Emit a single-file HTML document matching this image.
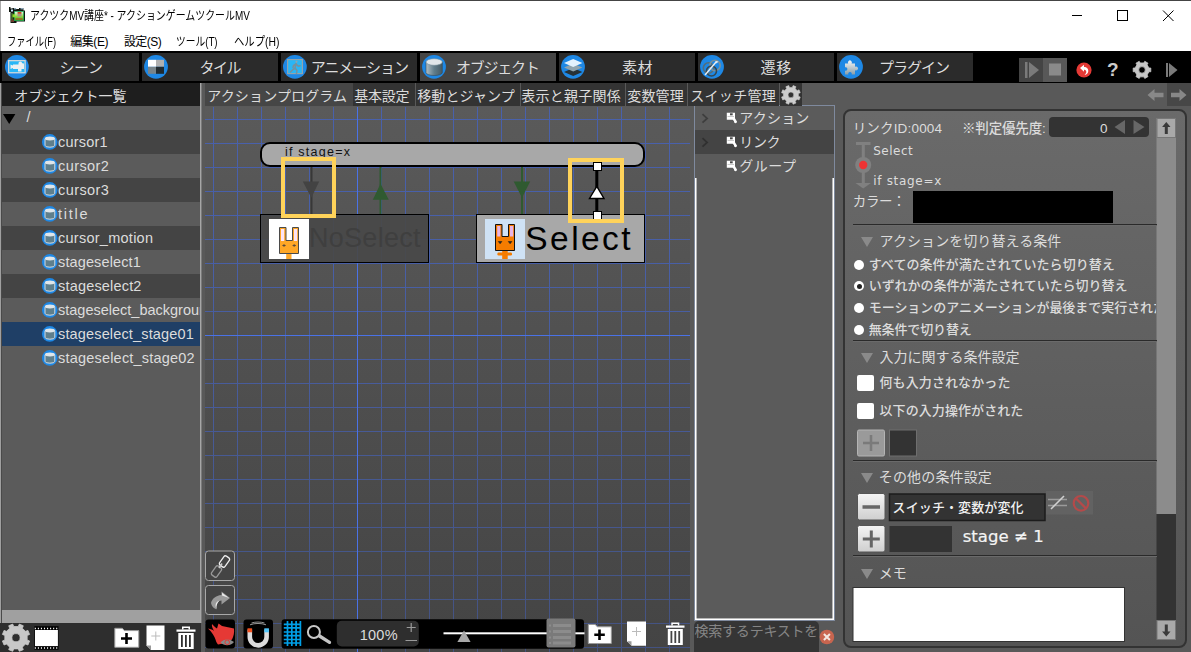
<!DOCTYPE html>
<html lang="ja"><head><meta charset="utf-8"><title>アクツクMV講座* - アクションゲームツクールMV</title>
<style>
*{box-sizing:border-box;margin:0;padding:0}
html,body{width:1191px;height:652px;overflow:hidden;background:#595959}
body{position:relative;font-family:"Liberation Sans","Noto Sans CJK JP",sans-serif;color:#dcdcdc;font-size:14px}
.a{position:absolute}
.t{position:absolute;white-space:nowrap;transform-origin:0 50%}
svg{position:absolute;overflow:visible}
.tb{position:absolute;top:53px;height:28px;width:137px;background:#2b2b2b}
.circ{position:absolute;width:23px;height:23px;border-radius:50%;background:#1e88e5;top:55px;overflow:hidden}
.row{position:absolute;left:2px;width:198px;height:24px}
.ob{position:absolute;left:42px;width:15px;height:15px;border-radius:50%;background:#1e88e5}
.ob i{position:absolute;left:4px;top:3px;width:7px;height:9px;background:#90a4ae;border-radius:3px/1.5px;border:1px solid #2a3a44}
.tab{position:absolute;top:83px;height:23px;background:#333}
.sec{position:absolute;width:0;height:0;border-left:6px solid transparent;border-right:6px solid transparent;border-top:10px solid #8a8a8a}
.hr{position:absolute;left:853px;width:304px;height:2px;background:#2a2a2a;border-bottom:1px solid #6a6a6a}
.radio{position:absolute;width:10px;height:10px;border-radius:50%;background:#fff;left:854px}
.chk{position:absolute;left:857px;width:17px;height:16px;background:#fff;border-radius:2px}
</style></head><body>
<!-- TITLE/MENU -->
<div class="a" style="left:0;top:0;width:1191px;height:51px;background:#fff"></div>
<div class="a" style="left:0;top:0;width:1191px;height:1px;background:#444"></div>
<div class="a" style="left:0;top:1px;width:1px;height:50px;background:#aaa"></div>
<svg style="left:9px;top:7px" width="16" height="16" viewBox="0 0 16 16">
<path d="M0 0h1.500v1.500h2V1h3.500v1h3V1h4.500v2.500H16v11h-8.500v1.500H1.500V5H0z" fill="#101810"/>
<rect x="2" y="2.500" width="2" height="2" fill="#cfe8ff"/><rect x="5" y="1.300" width="2.500" height="1" fill="#bfe0ff"/><rect x="11.500" y="1.300" width="3" height="1" fill="#bfe0ff"/>
<rect x="1.800" y="6" width="2.500" height="8.500" fill="#3a5a2a"/><rect x="2" y="12.500" width="3" height="2.500" fill="#6a3a2a"/>
<rect x="5" y="4" width="10" height="10" fill="#1f9a4a"/><rect x="3.500" y="7.300" width="2.500" height="3" fill="#8fe020"/>
<linearGradient id="icg" x1="0" y1="0" x2="0" y2="1"><stop offset="0" stop-color="#e8f6f0"/><stop offset=".55" stop-color="#8fd840"/><stop offset="1" stop-color="#4aa828"/></linearGradient>
<rect x="5.800" y="4.800" width="8.400" height="8.400" fill="url(#icg)"/>
<rect x="8.500" y="5" width="4" height="4.500" fill="#b09088"/><rect x="8.800" y="5" width="3.400" height="1.600" fill="#d04818"/>
<rect x="6.500" y="11.500" width="7" height="1" fill="#c03818"/>
</svg>
<span class="t" id="ttl" style="left:30.28px;top:7.3px;font-size:12px;line-height:18px;transform:scaleX(0.827);color:#000">アクツクMV講座* - アクションゲームツクールMV</span><span class="t" id="m1" style="left:6.88px;top:33px;font-size:12px;line-height:18px;transform:scaleX(0.774);color:#000">ファイル(F)</span><span class="t" id="m2" style="left:70.18px;top:33px;font-size:12px;line-height:18px;letter-spacing:-0.43px;color:#000">編集(E)</span><span class="t" id="m3" style="left:123.88px;top:33px;font-size:12px;line-height:18px;letter-spacing:-0.55px;color:#000">設定(S)</span><span class="t" id="m4" style="left:176.48px;top:33px;font-size:12px;line-height:18px;transform:scaleX(0.810);color:#000">ツール(T)</span><span class="t" id="m5" style="left:233.58px;top:33px;font-size:12px;line-height:18px;transform:scaleX(0.864);color:#000">ヘルプ(H)</span>
<svg style="left:1071px;top:9px" width="110" height="14" viewBox="0 0 110 14" fill="none" stroke="#000" stroke-width="1"><path d="M1 6.500H11"/><rect x="46.500" y="1.500" width="10" height="10"/><path d="M92 1.500L102.500 12M102.500 1.500L92 12"/></svg>

<!-- TOOLBAR -->
<div class="a" style="left:0;top:51px;width:1191px;height:32px;background:#000"></div>
<div class="tb" style="left:2px"></div><div class="tb" style="left:142px;width:136px"></div><div class="tb" style="left:281px;width:136px"></div>
<div class="tb" style="left:420px;width:136px;background:#454545"></div><div class="tb" style="left:559px;width:136px"></div><div class="tb" style="left:698px;width:136px"></div><div class="tb" style="left:837px;width:136px"></div>


<svg style="left:0;top:0" width="1191" height="652" viewBox="0 0 1191 652">
<defs><linearGradient id="cyl" x1="0" y1="0" x2="1" y2="0"><stop offset="0" stop-color="#b0bec5"/><stop offset=".5" stop-color="#607d8b"/><stop offset="1" stop-color="#455a64"/></linearGradient>
<linearGradient id="pz" x1="0" y1="0" x2="0" y2="1"><stop offset="0" stop-color="#f4f7f8"/><stop offset="1" stop-color="#8a9ea8"/></linearGradient></defs>
<g fill="#1e88e5"><circle cx="16.900" cy="66.800" r="11.900"/><circle cx="156" cy="66.800" r="11.900"/><circle cx="294.900" cy="66.800" r="11.900"/><circle cx="434" cy="66.800" r="11.900"/><circle cx="573" cy="66.800" r="11.900"/><circle cx="712" cy="66.800" r="11.900"/><circle cx="851" cy="66.800" r="11.900"/></g>
<!-- scene -->
<rect x="8" y="60" width="17.800" height="13.400" fill="#cfd8dc"/><rect x="9.300" y="61.300" width="15.200" height="10.800" fill="#29b6f6"/>
<path d="M10.500 64.500l2.500 1v-1h5.500v-1.200a1.800 1.800 0 0 1 3.600 0a1.300 1.300 0 0 1 1.900 1.200v4.500h-2.500v2.500h-3.500v-2.500h-5v-1l-2.500 1z" fill="#eceff1"/>
<!-- tile -->
<rect x="148" y="59.800" width="8" height="7" fill="#fff"/><rect x="156" y="59.800" width="8" height="7" fill="#b0b0b0"/><rect x="148" y="66.800" width="8" height="7" fill="#78848a"/><rect x="156" y="66.800" width="8" height="7" fill="#212b30"/>
<!-- animation -->
<rect x="287" y="59" width="16" height="15.200" fill="#90a4ae"/><rect x="288.200" y="60.200" width="13.600" height="12.800" fill="#29b6f6"/>
<g stroke="#78909c" stroke-width="1.500" fill="none" stroke-linecap="round"><circle cx="296.500" cy="61.800" r="1.100" fill="#90a4ae" stroke="none"/><path d="M296 63.500l-1 4.500 2 2.500-.5 3M295 68l-2.500 2-2 2M296 64l-2.500 1.500-.5 2M296.300 64.200l2 2 1.800-.5"/></g>
<!-- object -->
<path d="M426 62v10.500a8.150 3 0 0 0 16.300 0V62z" fill="url(#cyl)" stroke="#37474f" stroke-width=".6"/><ellipse cx="434.150" cy="62" rx="8.150" ry="3.300" fill="#dfe6ea" stroke="#78909c" stroke-width=".6"/>
<!-- material -->
<path d="M564 72l9.200-4 9.200 4-9.200 4z" fill="#263238"/><path d="M564 67.500l9.200-4 9.200 4-9.200 4z" fill="#90a4ae"/><path d="M564 63l9.200-4 9.200 4-9.200 4z" fill="#e3f2fd"/>
<!-- transition -->
<g fill="none" stroke-width="1.600"><circle cx="708.500" cy="68" r="5.200" stroke="#546e7a"/><circle cx="715" cy="65.500" r="5.200" stroke="#78909c"/><circle cx="711.500" cy="71" r="5" stroke="#37474f"/><path d="M705 75l11.500-13.500" stroke="#eceff1" stroke-width="1.400"/><path d="M715.500 61l3 .5-2 2z" fill="#eceff1" stroke="none"/></g>
<!-- plugin -->
<path d="M845 63.500h3.200a2 2 0 1 1 3.400 0h3.400v3.300a2 2 0 1 1 0 3.400v4.300h-3.300a1.800 1.800 0 1 0-3.400 0H845v-3.800a1.800 1.800 0 1 0 0-3.400z" fill="url(#pz)"/>
<!-- right toolbar -->
<rect x="1019" y="58" width="24" height="24" fill="#444"/><rect x="1043" y="58" width="24" height="24" fill="#585858"/>
<rect x="1025" y="62" width="2.500" height="16" fill="#7a7a7a"/><path d="M1029 62v16l10-8z" fill="#7a7a7a"/><rect x="1049" y="63.500" width="12" height="12" fill="#8a8a8a"/>
<circle cx="1084" cy="70" r="7.600" fill="#e53935"/><path d="M1080 68l4-3.200v2.200c3.500 0 5 2.500 4 5.500-.8 1.800-2 2.300-3.500 2.300 1.800-1 2.200-2.800 1.500-4-.5-.8-1.200-1-2-1v2z" fill="#fff"/>
<rect x="1166" y="63" width="2" height="14" fill="#7a7a7a"/><path d="M1169 63v14l8.500-7z" fill="#7a7a7a"/>
<!-- gears -->
<path d="M1148.95 68.04L1150.80 68.03L1150.80 71.77L1148.95 71.76L1147.09 74.99L1148.02 76.59L1144.78 78.46L1143.86 76.85L1140.14 76.85L1139.22 78.46L1135.98 76.59L1136.91 74.99L1135.05 71.76L1133.20 71.77L1133.20 68.03L1135.05 68.04L1136.91 64.81L1135.98 63.21L1139.22 61.34L1140.14 62.95L1143.86 62.95L1144.78 61.34L1148.02 63.21L1147.09 64.81ZM1145.30 69.90A3.3 3.3 0 1 0 1138.70 69.90A3.3 3.3 0 1 0 1145.30 69.90Z" fill="#c6c6c6" fill-rule="evenodd" stroke="#c6c6c6" stroke-width=".8" stroke-linejoin="round"/>
<!-- header arrows -->
<rect x="1167" y="83" width="24" height="23" fill="#474747"/>
<path d="M1147.500 95l7-6v3.800h9v4.400h-9v3.800z" fill="#888"/><path d="M1186.500 95l-7-6v3.800h-8.500v4.400h8.500v3.800z" fill="#888"/>
</svg>
<span class="t" style="left:1107px;top:58px;font-size:19px;line-height:24px;font-weight:bold;color:#ccc">?</span>
<span class="t" id="tb1" style="left:59.6px;top:56.55px;font-size:15px;line-height:22.5px;letter-spacing:-0.48px;">シーン</span><span class="t" id="tb2" style="left:199.4px;top:56.55px;font-size:15px;line-height:22.5px;letter-spacing:-1.46px;">タイル</span><span class="t" id="tb3" style="left:310.7px;top:56.55px;font-size:15px;line-height:22.5px;letter-spacing:-1.03px;">アニメーション</span><span class="t" id="tb4" style="left:456px;top:56.55px;font-size:15px;line-height:22.5px;letter-spacing:-1.22px;">オブジェクト</span><span class="t" id="tb5" style="left:621.9px;top:56.55px;font-size:15px;line-height:22.5px;letter-spacing:0.58px;">素材</span><span class="t" id="tb6" style="left:760.6px;top:56.55px;font-size:15px;line-height:22.5px;letter-spacing:0.58px;">遷移</span><span class="t" id="tb7" style="left:879.1px;top:56.55px;font-size:15px;line-height:22.5px;letter-spacing:-1.05px;">プラグイン</span>

<!-- LEFT PANEL -->
<div class="a" style="left:0;top:83px;width:1px;height:569px;background:#a0a0a0"></div><div class="a" style="left:1px;top:83px;width:1px;height:569px;background:#4a4a4a"></div>
<div class="a" style="left:2px;top:83px;width:198px;height:23px;background:#1e1e1e"></div>
<span class="t" id="lh" style="left:14.36px;top:85.5px;font-size:14px;line-height:21px;letter-spacing:0.03px;">オブジェクト一覧</span>
<div class="a" style="left:2px;top:106px;width:198px;height:505px;background:#5b5b5b"></div>
<div class="row" style="top:130px;background:#444"></div>
<div class="row" style="top:178px;background:#444"></div>
<div class="row" style="top:226px;background:#444"></div>
<div class="row" style="top:274px;background:#444"></div>
<div class="row" style="top:322px;background:#1f3f66"></div>
<div class="a" style="left:2px;top:610px;width:198px;height:13px;background:#a0a0a0"></div>
<div class="a" style="left:0px;top:623px;width:201px;height:29px;background:#2e2e2e"></div>
<div class="a" style="left:200px;top:83px;width:1px;height:540px;background:#a6a6a6"></div><div class="a" style="left:201px;top:83px;width:1px;height:540px;background:#7a7a7a"></div>
<svg style="left:0;top:0" width="1191" height="652" viewBox="0 0 1191 652">
<path d="M3 114h12.400l-6.200 10z" fill="#000"/>
<circle cx="49.750" cy="141.9" r="7.800" fill="#1e88e5"/><path d="M45 138.7v6.600a4.900 1.900 0 0 0 9.800 0v-6.600z" fill="#5f7f8c" stroke="#e4e8ea" stroke-width=".9"/><ellipse cx="49.900" cy="138.5" rx="4.900" ry="1.900" fill="#dfe6ea"/>
<circle cx="49.750" cy="165.9" r="7.800" fill="#1e88e5"/><path d="M45 162.7v6.600a4.900 1.900 0 0 0 9.800 0v-6.600z" fill="#5f7f8c" stroke="#e4e8ea" stroke-width=".9"/><ellipse cx="49.900" cy="162.5" rx="4.900" ry="1.900" fill="#dfe6ea"/>
<circle cx="49.750" cy="189.9" r="7.800" fill="#1e88e5"/><path d="M45 186.7v6.600a4.900 1.900 0 0 0 9.800 0v-6.600z" fill="#5f7f8c" stroke="#e4e8ea" stroke-width=".9"/><ellipse cx="49.900" cy="186.5" rx="4.900" ry="1.900" fill="#dfe6ea"/>
<circle cx="49.750" cy="213.9" r="7.800" fill="#1e88e5"/><path d="M45 210.7v6.600a4.900 1.900 0 0 0 9.800 0v-6.600z" fill="#5f7f8c" stroke="#e4e8ea" stroke-width=".9"/><ellipse cx="49.900" cy="210.5" rx="4.900" ry="1.900" fill="#dfe6ea"/>
<circle cx="49.750" cy="237.9" r="7.800" fill="#1e88e5"/><path d="M45 234.7v6.600a4.900 1.900 0 0 0 9.800 0v-6.600z" fill="#5f7f8c" stroke="#e4e8ea" stroke-width=".9"/><ellipse cx="49.900" cy="234.5" rx="4.900" ry="1.900" fill="#dfe6ea"/>
<circle cx="49.750" cy="261.9" r="7.800" fill="#1e88e5"/><path d="M45 258.7v6.600a4.900 1.900 0 0 0 9.800 0v-6.600z" fill="#5f7f8c" stroke="#e4e8ea" stroke-width=".9"/><ellipse cx="49.900" cy="258.5" rx="4.900" ry="1.900" fill="#dfe6ea"/>
<circle cx="49.750" cy="285.9" r="7.800" fill="#1e88e5"/><path d="M45 282.7v6.600a4.900 1.900 0 0 0 9.800 0v-6.600z" fill="#5f7f8c" stroke="#e4e8ea" stroke-width=".9"/><ellipse cx="49.900" cy="282.5" rx="4.900" ry="1.900" fill="#dfe6ea"/>
<circle cx="49.750" cy="309.9" r="7.800" fill="#1e88e5"/><path d="M45 306.7v6.600a4.900 1.900 0 0 0 9.800 0v-6.600z" fill="#5f7f8c" stroke="#e4e8ea" stroke-width=".9"/><ellipse cx="49.900" cy="306.5" rx="4.900" ry="1.900" fill="#dfe6ea"/>
<circle cx="49.750" cy="333.9" r="7.800" fill="#1e88e5"/><path d="M45 330.7v6.600a4.900 1.900 0 0 0 9.800 0v-6.600z" fill="#5f7f8c" stroke="#e4e8ea" stroke-width=".9"/><ellipse cx="49.900" cy="330.5" rx="4.900" ry="1.900" fill="#dfe6ea"/>
<circle cx="49.750" cy="357.9" r="7.800" fill="#1e88e5"/><path d="M45 354.7v6.600a4.900 1.900 0 0 0 9.800 0v-6.600z" fill="#5f7f8c" stroke="#e4e8ea" stroke-width=".9"/><ellipse cx="49.900" cy="354.5" rx="4.900" ry="1.900" fill="#dfe6ea"/>

<!-- bottom-left icons -->
<path d="M18.22 626.52L19.27 624.09L23.31 625.76L22.33 628.22L25.48 631.37L27.94 630.39L29.61 634.43L27.18 635.48L27.18 639.92L29.61 640.97L27.94 645.01L25.48 644.03L22.33 647.18L23.31 649.64L19.27 651.31L18.22 648.88L13.78 648.88L12.73 651.31L8.69 649.64L9.67 647.18L6.52 644.03L4.06 645.01L2.39 640.97L4.82 639.92L4.82 635.48L2.39 634.43L4.06 630.39L6.52 631.37L9.67 628.22L8.69 625.76L12.73 624.09L13.78 626.52ZM20.10 637.70A4.1 4.1 0 1 0 11.90 637.70A4.1 4.1 0 1 0 20.10 637.70Z" fill="#c8c8c8" fill-rule="evenodd" stroke="#c8c8c8" stroke-width=".8" stroke-linejoin="round"/>
<rect x="34.400" y="626.200" width="24.100" height="23.500" fill="#000"/><rect x="35" y="630" width="22.900" height="16.100" fill="#fff"/>
<path d="M34.800 628.500h23M34.800 648h23" stroke="#fff" stroke-width="1.700" stroke-dasharray="1.100 1.950" fill="none"/>
<path d="M114.800 628.300h7.500l2 2.300h14.500v16.700h-24z" fill="#fff" stroke="#9a9a9a" stroke-width="1"/><path d="M126.500 633v11M121 638.500h11" stroke="#000" stroke-width="2.600" fill="none"/>
<path d="M146.500 625.500h18v24.500h-13.500l-4.500-4.500z" fill="#fff"/><path d="M146.500 645.500h4.500v4.500z" fill="#999"/><path d="M155.800 631.500v9M151.300 636h9" stroke="#bbb" stroke-width="1" fill="none"/>
<g fill="#fff"><rect x="176.500" y="629.500" width="19" height="2.200"/><path d="M182 629.500v-3h8v3h-1.500v-1.600h-5v1.600z"/><path d="M178.300 633h15.400v16h-15.400zM181 635v12h1.800v-12zM185 635v12h1.800v-12zM189 635v12h1.800v-12z" fill-rule="evenodd"/></g>
</svg>
<span class="t" id="l0" style="left:26.42px;top:107.125px;font-size:14.5px;line-height:21.75px;letter-spacing:2.13px;">/</span><span class="t" id="l1" style="left:58.02px;top:131.925px;font-size:14.5px;line-height:21.75px;letter-spacing:0.20px;">cursor1</span><span class="t" id="l2" style="left:58.02px;top:155.925px;font-size:14.5px;line-height:21.75px;letter-spacing:0.42px;">cursor2</span><span class="t" id="l3" style="left:58.02px;top:179.925px;font-size:14.5px;line-height:21.75px;letter-spacing:0.42px;">cursor3</span><span class="t" id="l4" style="left:58.02px;top:203.925px;font-size:14.5px;line-height:21.75px;letter-spacing:1.75px;">title</span><span class="t" id="l5" style="left:58.02px;top:227.925px;font-size:14.5px;line-height:21.75px;letter-spacing:0.26px;">cursor_motion</span><span class="t" id="l6" style="left:58.02px;top:251.925px;font-size:14.5px;line-height:21.75px;letter-spacing:0.12px;">stageselect1</span><span class="t" id="l7" style="left:58.02px;top:275.925px;font-size:14.5px;line-height:21.75px;letter-spacing:0.18px;">stageselect2</span><div class="a" style="left:2px;top:298px;width:198px;height:24px;overflow:hidden"><div class="a" style="left:-2px;top:-298px"><span class="t" id="l8" style="left:58.02px;top:299.925px;font-size:14.5px;line-height:21.75px;">stageselect_background</span></div></div><span class="t" id="l9" style="left:58.02px;top:323.925px;font-size:14.5px;line-height:21.75px;letter-spacing:0.15px;">stageselect_stage01</span><span class="t" id="l10" style="left:58.02px;top:347.925px;font-size:14.5px;line-height:21.75px;letter-spacing:0.20px;">stageselect_stage02</span>

<!-- TREE PANEL -->
<div class="a" style="left:694px;top:105px;width:141px;height:516px;background:#5b5b5b;border:1px solid #7f8a9e"></div>
<div class="a" style="left:695px;top:130px;width:139px;height:24px;background:#444"></div>
<div class="a" style="left:695px;top:178px;width:139px;height:442px;border:1px solid #fff;border-top:none;box-shadow:inset 1px 0 0 rgba(255,255,255,.55),inset -1px 0 0 rgba(255,255,255,.55),inset 0 -1px 0 rgba(255,255,255,.55)"></div>
<!-- TABS -->
<div class="tab" style="left:205px;width:148px;background:#464646"></div>
<div class="tab" style="left:353px;width:62px"></div>
<div class="tab" style="left:416px;width:104px"></div>
<div class="tab" style="left:521px;width:104px"></div>
<div class="tab" style="left:626px;width:61px"></div>
<div class="tab" style="left:688px;width:91px"></div>
<div class="tab" style="left:780px;width:22px"></div>
<span class="t" id="tab1" style="left:207.26px;top:85.7px;font-size:14px;line-height:21px;letter-spacing:0.15px;">アクションプログラム</span><span class="t" id="tab2" style="left:354.36px;top:85.7px;font-size:14px;line-height:21px;letter-spacing:-0.31px;">基本設定</span><span class="t" id="tab3" style="left:417.16px;top:85.7px;font-size:14px;line-height:21px;letter-spacing:0.13px;">移動とジャンプ</span><span class="t" id="tab4" style="left:521.16px;top:85.7px;font-size:14px;line-height:21px;letter-spacing:0.28px;">表示と親子関係</span><span class="t" id="tab5" style="left:627.16px;top:85.7px;font-size:14px;line-height:21px;letter-spacing:0.23px;">変数管理</span><span class="t" id="tab6" style="left:690.16px;top:85.7px;font-size:14px;line-height:21px;letter-spacing:0.34px;">スイッチ管理</span>

<!-- CANVAS -->
<div id="canvas" class="a" style="left:205px;top:107px;width:485px;height:545px;overflow:hidden;background:linear-gradient(#5a5a5a,#444)">
<div class="a" style="left:0;top:0;width:485px;height:545px;background-image:linear-gradient(to right,#4464c8 1px,transparent 1px),linear-gradient(to bottom,#4464c8 1px,transparent 1px);background-size:24px 24px;background-position:8px 12px;opacity:.74;-webkit-mask-image:linear-gradient(#000 20%,rgba(0,0,0,.62));mask-image:linear-gradient(#000 20%,rgba(0,0,0,.62))"></div>
<div class="a" style="left:152px;top:0;width:1px;height:545px;background:#4a72e6"></div>
<div class="a" style="left:0;top:228px;width:485px;height:1px;background:#4a72e6"></div>
</div>
<svg style="left:0;top:0" width="1191" height="652" viewBox="0 0 1191 652">
<!-- pill -->
<rect x="261" y="143" width="383" height="23" rx="9" fill="#a8a8a8" stroke="#000" stroke-width="2"/>
<!-- arrows -->
<rect x="310.500" y="167" width="2" height="47" fill="#383838"/><path d="M302.800 181.500H319.200L311.300 197.700Z" fill="#434343"/>
<rect x="379.500" y="167" width="2" height="47" fill="#2f5a30"/><path d="M372.800 199.800H388.800L380.500 183.700Z" fill="#2f5a30"/>
<rect x="521" y="167" width="2" height="47" fill="#2f5a30"/><path d="M513.700 181.500H530.100L522 197.700Z" fill="#2f5a30"/>
<!-- NoSelect node -->
<rect x="260.500" y="214.500" width="168" height="48" fill="#484848" fill-opacity=".93" stroke="#000" stroke-width="1"/>
<rect x="269" y="219" width="40" height="40" fill="#fff"/>
<path d="M279.500 227.500H286V240.500H292.500V227.500H298.500V253.500H279.500Z" fill="#ffa726" stroke="#4a4a4a" stroke-width="1"/>
<rect x="286.200" y="254" width="5.300" height="5" fill="#ffa726"/>
<rect x="281" y="229" width="3.200" height="12" fill="#fce4f6"/><rect x="294" y="229" width="3.200" height="12" fill="#fce4f6"/>
<path d="M282 245.500l2-1.300 2 1.300-2 1.300zM292.200 245.500l2-1.300 2 1.300-2 1.300z" fill="#5a4a3a"/>
<!-- Select node -->
<rect x="476.500" y="214.500" width="168" height="48" fill="#a8a8a8" stroke="#000" stroke-width="1"/>
<rect x="485" y="219" width="40" height="40" fill="#cfe2f5"/>
<path d="M495.500 224.500H502V236.500H508.500V224.500H514.500V250.500H495.500Z" fill="#f57c00" stroke="#111" stroke-width="1"/>
<rect x="502.200" y="251" width="5.500" height="8" fill="#f57c00"/>
<rect x="497.400" y="252.500" width="14.600" height="3" rx="1.300" fill="#f57c00"/>
<rect x="497.200" y="226" width="3.200" height="10.500" fill="#e8b4e4"/><rect x="510" y="226" width="3.200" height="10.500" fill="#e8b4e4"/>
<path d="M498.300 241.500h3.600l-1.800 2.300zM508.300 241.500h3.600l-1.800 2.300z" fill="#222" stroke="#222" stroke-width=".6"/>
<!-- white arrow -->
<rect x="595.300" y="167" width="3" height="47" fill="#000"/>
<path d="M596.800 186.300L604 198.500H589.500Z" fill="#fff" stroke="#000" stroke-width="1.400" stroke-linejoin="miter"/>
<rect x="593.500" y="162.500" width="8" height="8" fill="#fff" stroke="#000" stroke-width="1"/>
<rect x="593.500" y="211.500" width="8" height="8" fill="#fff" stroke="#000" stroke-width="1"/>
<!-- yellow boxes -->
<rect x="283" y="159" width="51" height="57" fill="none" stroke="#ffd35a" stroke-width="4"/>
<rect x="570" y="160" width="52" height="61" fill="none" stroke="#ffd35a" stroke-width="4"/>
</svg>
<span class="t" id="n0" style="left:284.9px;top:143.125px;font-size:12.5px;line-height:18.75px;letter-spacing:1.25px;clip-path:inset(0 0 5px 0);color:#111">if stage=x</span><span class="t" id="n1" style="left:308.92px;top:218.25px;font-size:27px;line-height:40.5px;letter-spacing:0.30px;color:#3f3f3f">NoSelect</span><span class="t" id="n2" style="left:525.36px;top:213.575px;font-size:33.5px;line-height:50.25px;letter-spacing:2.41px;color:#000">Select</span>

<!-- TREE PANEL text -->

<!-- tree icons, tab gear, canvas bottom tools -->
<svg style="left:0;top:0" width="1191" height="652" viewBox="0 0 1191 652">
<path d="M792.32 87.43L793.08 85.55L795.97 86.75L795.17 88.61L797.19 90.63L799.05 89.83L800.25 92.72L798.37 93.48L798.37 96.32L800.25 97.08L799.05 99.97L797.19 99.17L795.17 101.19L795.97 103.05L793.08 104.25L792.32 102.37L789.48 102.37L788.72 104.25L785.83 103.05L786.63 101.19L784.61 99.17L782.75 99.97L781.55 97.08L783.43 96.32L783.43 93.48L781.55 92.72L782.75 89.83L784.61 90.63L786.63 88.61L785.83 86.75L788.72 85.55L789.48 87.43ZM793.80 94.90A2.9 2.9 0 1 0 788.00 94.90A2.9 2.9 0 1 0 793.80 94.90Z" fill="#cdcdcd" fill-rule="evenodd" stroke="#cdcdcd" stroke-width=".6" stroke-linejoin="round"/>
<path d="M702.500 114.200l4.600 4.200-4.600 4.200" fill="none" stroke="#3e3e3e" stroke-width="1.800"/><path d="M702.500 138.200l4.600 4.200-4.600 4.200" fill="none" stroke="#303030" stroke-width="1.800"/>
<path d="M726.800 112.7h8.200v5.500l1.300 2.300a1.500 1.500 0 1 1-2.300 .8l-1.300-1.600H726.800z" fill="#fff"/><rect x="730" y="113.3" width="2.700" height="2" fill="#4a4a4a"/><rect x="727.500" y="116.2" width="6.500" height=".8" fill="#bdbdbd"/>
<path d="M726.800 136.7h8.200v5.500l1.300 2.300a1.500 1.500 0 1 1-2.300 .8l-1.300-1.600H726.800z" fill="#fff"/><rect x="730" y="137.3" width="2.700" height="2" fill="#4a4a4a"/><rect x="727.500" y="140.2" width="6.500" height=".8" fill="#bdbdbd"/>
<path d="M726.800 160.7h8.200v5.500l1.300 2.300a1.500 1.500 0 1 1-2.300 .8l-1.300-1.600H726.800z" fill="#fff"/><rect x="730" y="161.3" width="2.700" height="2" fill="#4a4a4a"/><rect x="727.500" y="164.2" width="6.500" height=".8" fill="#bdbdbd"/>

<rect x="205.500" y="551" width="29" height="29.500" rx="3" fill="#444" stroke="#a8a8a8" stroke-width="1"/>
<rect x="205.500" y="585.500" width="29" height="29" rx="3" fill="#444" stroke="#a8a8a8" stroke-width="1"/>
<g fill="none" stroke-width="1.300"><rect x="-3.300" y="-5.500" width="6.600" height="11" rx="1.800" transform="translate(224.500 561.500) rotate(35)" stroke="#eee"/><rect x="-3.300" y="-5.500" width="6.600" height="11" rx="1.800" transform="translate(216.500 571.500) rotate(35)" stroke="#999"/><path d="M222 563.500l-3 4.500" stroke="#ccc" stroke-width="1.600"/></g>
<path d="M230 598l-8.500-6.500v3.500c-6 .5-9.500 4-10.500 8 .5 3.500 3 5.500 5.500 6.500-2-3-1.800-8 5-9v4z" fill="#9a9a9a"/><path d="M229 598l-7-5.200v2.700z" fill="#e8e8e8"/><path d="M216.500 609c-2-3-1.500-7 3-8.600-2.500 2.400-3.200 5.600-3 8.600z" fill="#eee"/>
<rect x="205.500" y="619.500" width="29.500" height="29" rx="3" fill="#000"/>
<path d="M208 628.500c3 .5 4.500 1 6 2.500-1.500-3-2.500-4.500-2-7 2 2.500 3.500 3.500 5 4.500l1.500-5 3.500 2.500 12 2.500c.5 4-.5 8-2 11l-5.500 3.500-8.500 1.500c-1.500-2-2-3-2.500-5-1-3-3.500-7.500-7.500-11z" fill="#e53935"/>
<path d="M220.500 642.500c3-3.500 8.500-4.300 13.500-.5-3.500 4-9.500 4.500-13.500.5z" fill="#8a8a8a"/><circle cx="227.200" cy="642.300" r="2.300" fill="none" stroke="#e53935" stroke-width="1"/>
<rect x="243.500" y="619.500" width="29.500" height="29" rx="3" fill="#000"/>
<path d="M247.500 629.500v7.500a10.700 10.700 0 0 0 21.400 0v-7.500h-4.600v7.500a6.100 6.100 0 0 1-12.200 0v-7.500z" fill="#dcdcdc"/><rect x="247.500" y="628.300" width="4.600" height="4" fill="#f4511e"/><rect x="264.300" y="628.300" width="4.600" height="4" fill="#4fc3f7"/>
<path d="M250 624.800c5-1.800 11-1.800 16 0M251.500 623c4-1.300 9-1.300 13 0" fill="none" stroke="#bbb" stroke-width=".8"/>
<rect x="281.600" y="619.300" width="302.400" height="29.500" rx="3" fill="#000"/>
<path d="M287.5 621V646M291.8 621V646M296.1 621V646M300.4 621V646M283.800 624.3H300.400M283.800 627.9H300.400M283.800 632H300.400M283.800 635.6H300.400M283.800 639.5H300.400M283.800 643H300.400" fill="none" stroke="#00a0e8" stroke-width="1.700"/>
<circle cx="313.900" cy="632" r="6" fill="none" stroke="#c8c8c8" stroke-width="2"/><path d="M319.500 636l10 6.300" stroke="#c4c4c4" stroke-width="3.300" stroke-linecap="round"/>
<rect x="336.800" y="620.800" width="82" height="25.600" rx="5" fill="#2e2e2e"/>
<path d="M411.200 623v9M406.700 627.500h9M405.500 640.500h11.500" stroke="#9a9a9a" stroke-width="1.200" fill="none"/>
<rect x="443.500" y="632.300" width="141" height="2" fill="#fff"/>
<path d="M457.400 642l6.600-11.500 6.600 11.500z" fill="#a8a8a8"/>
<rect x="546.500" y="618.500" width="29" height="29" rx="2" fill="#7a7a7a"/>
<path d="M553 625.500h18M553 631.500h18M553 637.500h18M553 643h18" stroke="#8c8c8c" stroke-width="3" fill="none"/><path d="M549 625.500h2M549 631.500h2M549 637.500h2M549 643h2" stroke="#8c8c8c" stroke-width="2" fill="none"/>
<path d="M588.300 624.500h7l2 2.300h14v16.700h-23z" fill="#fff" stroke="#9a9a9a" stroke-width="1"/><path d="M599.500 629.500v10.500M594.300 634.800h10.500" stroke="#000" stroke-width="2.600" fill="none"/>
<path d="M627 621.500h19v24.300h-14.500l-4.500-4.500z" fill="#fff"/><path d="M627 641.300h4.500v4.500z" fill="#999"/><path d="M636.500 627v9M632 631.500h9" stroke="#bbb" stroke-width="1" fill="none"/>
<g fill="#fff"><rect x="666" y="625.500" width="18.500" height="2.200"/><path d="M671.300 625.500v-3h8v3h-1.500v-1.600h-5v1.600z"/><path d="M667.800 629h15v16h-15zM670.500 631v12h1.800v-12zM674.400 631v12h1.800v-12zM678.300 631v12h1.800v-12z" fill-rule="evenodd"/></g>
<!-- search -->
<rect x="694" y="621" width="125" height="36" rx="5" fill="#353535"/>
<circle cx="826.900" cy="637" r="7.300" fill="#c8654f"/><path d="M823.900 634l6 6M829.900 634l-6 6" stroke="#f4e6e0" stroke-width="2" fill="none"/>
</svg>
<span class="t" id="tr1" style="left:739.36px;top:107.5px;font-size:14px;line-height:21px;letter-spacing:0.17px;">アクション</span><span class="t" id="tr2" style="left:739.36px;top:131.5px;font-size:14px;line-height:21px;letter-spacing:-0.41px;">リンク</span><span class="t" id="tr3" style="left:739.36px;top:155.5px;font-size:14px;line-height:21px;letter-spacing:0.50px;">グループ</span>

<!-- RIGHT PANEL -->
<div class="a" style="left:843px;top:109px;width:344px;height:539px;border:2px solid #333;border-radius:8px;background:linear-gradient(#6a6a6a,#545454)"></div>

<!-- right panel widgets -->
<svg style="left:0;top:0" width="1191" height="652" viewBox="0 0 1191 652">
<!-- link icon -->
<g fill="#808080"><rect x="856" y="142" width="14.500" height="3"/><rect x="861.800" y="145" width="3" height="14"/><circle cx="863.200" cy="165" r="8"/><rect x="861.800" y="172" width="3" height="12"/><path d="M855.500 183h15.400l-7.700 5.500z"/></g>
<circle cx="863.200" cy="165" r="4.200" fill="#ee3333"/>
<!-- spin -->
<rect x="1049" y="117" width="100" height="20" rx="4" fill="#333"/>
<path d="M1114.500 127l10.500-7v14zM1144.500 127l-11-7v14z" fill="#676767"/>
<!-- scrollbar -->
<rect x="1156.500" y="118" width="19.500" height="396" fill="#8c8c8c"/>
<rect x="1156.500" y="514" width="19.500" height="106" fill="#333"/>
<rect x="1157" y="118.500" width="18.500" height="19" fill="#a9a9a9" stroke="#787878" stroke-width="1"/>
<rect x="1157" y="620.500" width="18.500" height="19" fill="#a9a9a9" stroke="#787878" stroke-width="1"/>
<path d="M1166.300 122l4.200 5h-2.700v7h-3v-7h-2.700z" fill="#3a3a3a"/>
<path d="M1166.300 636.500l4.200-5h-2.700v-7h-3v7h-2.700z" fill="#3a3a3a"/>
<!-- color -->
<rect x="913" y="191" width="200" height="32" fill="#000"/>
<!-- buttons -->
<rect x="857.500" y="430" width="27" height="26" rx="1.500" fill="#9a9a9a" stroke="#b4b4b4" stroke-width="1"/>
<path d="M871 435v16M863 443h16" stroke="#7a7a7a" stroke-width="2.500" fill="none"/>
<rect x="889.500" y="430" width="27" height="26" fill="#333" stroke="#6e6e6e" stroke-width="1"/>
<linearGradient id="bg1" x1="0" y1="0" x2="0" y2="1"><stop offset="0" stop-color="#f4f4f4"/><stop offset="1" stop-color="#cfcfcf"/></linearGradient>
<rect x="857.500" y="493.500" width="27.500" height="26.500" rx="2" fill="url(#bg1)" stroke="#555" stroke-width="1"/>
<path d="M862.500 507h17.500" stroke="#666" stroke-width="3.500" fill="none"/>
<rect x="857.500" y="525.500" width="27.500" height="26.500" rx="2" fill="url(#bg1)" stroke="#555" stroke-width="1"/>
<path d="M871.300 530.500v17M862.800 539h17" stroke="#666" stroke-width="3" fill="none"/>
<rect x="889.500" y="494" width="155.500" height="26.500" fill="#333" stroke="#1c1c1c" stroke-width="1.500"/>
<rect x="889.500" y="526" width="62.500" height="26" fill="#333"/>
<!-- neq/forbidden -->
<rect x="1046" y="491" width="47" height="23.500" fill="#626262"/>
<g stroke="#9a9a9a" stroke-width="1.600" fill="none"><path d="M1048 499.500h19M1048 505.500h19"/><path d="M1051 509l13-13" stroke="#d0d0d0"/></g>
<circle cx="1081" cy="503.300" r="7.300" fill="none" stroke="#b34a4a" stroke-width="2.200"/><path d="M1075.800 498.200l10.400 10.400" stroke="#b34a4a" stroke-width="2.200"/>
<!-- memo -->
<rect x="853" y="587.500" width="271.500" height="54" fill="#fff" stroke="#333" stroke-width="1"/>
</svg>
<div class="hr" style="top:224px"></div><div class="hr" style="top:340px"></div><div class="hr" style="top:460px"></div><div class="hr" style="top:555px"></div>
<div class="sec" style="left:861px;top:237px"></div><div class="sec" style="left:861px;top:353px"></div><div class="sec" style="left:861px;top:473px"></div><div class="sec" style="left:861px;top:569px"></div>
<div class="radio" style="top:259.500px"></div><div class="radio" style="top:281px"><i class="a" style="left:2.500px;top:2.500px;width:5px;height:5px;border-radius:50%;background:#222"></i></div><div class="radio" style="top:303px"></div><div class="radio" style="top:324.500px"></div>
<div class="chk" style="top:375px"></div><div class="chk" style="top:403px"></div>
<span class="t" id="p1" style="left:852.69px;top:119.075px;font-size:13.5px;line-height:20.25px;letter-spacing:0.17px;">リンクID:0004</span><span class="t" id="p2" style="left:961.96px;top:119.075px;font-size:13.5px;line-height:20.25px;letter-spacing:-0.16px;font-weight:500">※判定優先度:</span><span class="t" id="p3" style="left:1099.96px;top:118.875px;font-size:13.5px;line-height:20.25px;letter-spacing:1.06px;">0</span><span class="t" id="p4" style="left:873.22px;top:142px;font-size:12px;line-height:18px;letter-spacing:0.51px;font-family:'DejaVu Sans',sans-serif">Select</span><span class="t" id="p5" style="left:873.22px;top:172.2px;font-size:12px;line-height:18px;letter-spacing:0.69px;font-family:'DejaVu Sans',sans-serif">if stage=x</span><span class="t" id="p6" style="left:852.69px;top:191.875px;font-size:13.5px;line-height:20.25px;letter-spacing:-0.29px;">カラー：</span><span class="t" id="s1" style="left:879.56px;top:231px;font-size:14px;line-height:21px;letter-spacing:0.07px;">アクションを切り替える条件</span><span class="t" id="r1" style="left:868.72px;top:254.75px;font-size:13px;line-height:19.5px;letter-spacing:0.05px;font-weight:500">すべての条件が満たされていたら切り替え</span><span class="t" id="r2" style="left:868.72px;top:276.25px;font-size:13px;line-height:19.5px;letter-spacing:-0.05px;font-weight:500">いずれかの条件が満たされていたら切り替え</span><div class="a" style="left:860px;top:295px;width:296px;height:26px;overflow:hidden"><div class="a" style="left:-860px;top:-295px"><span class="t" id="r3" style="left:868.72px;top:298.25px;font-size:13px;line-height:19.5px;letter-spacing:-0.04px;font-weight:500">モーションのアニメーションが最後まで実行されたら切り替え</span></div></div><span class="t" id="r4" style="left:868.72px;top:319.75px;font-size:13px;line-height:19.5px;letter-spacing:-0.14px;font-weight:500">無条件で切り替え</span><span class="t" id="s2" style="left:879.46px;top:346.5px;font-size:14px;line-height:21px;">入力に関する条件設定</span><span class="t" id="c1" style="left:879.52px;top:373.25px;font-size:13px;line-height:19.5px;letter-spacing:0.10px;font-weight:500">何も入力されなかった</span><span class="t" id="c2" style="left:879.52px;top:401.25px;font-size:13px;line-height:19.5px;letter-spacing:0.08px;font-weight:500">以下の入力操作がされた</span><span class="t" id="s3" style="left:878.86px;top:466.8px;font-size:14px;line-height:21px;letter-spacing:0.13px;">その他の条件設定</span><span class="t" id="d1" style="left:892.52px;top:497.55px;font-size:13px;line-height:19.5px;letter-spacing:0.12px;font-weight:500;color:#f0f0f0">スイッチ・変数が変化</span><span class="t" id="e1" style="left:962.64px;top:525.125px;font-size:16.5px;line-height:24.75px;letter-spacing:0.05px;-webkit-text-stroke:.2px #f4f4f4;color:#f4f4f4;font-family:'DejaVu Sans',sans-serif">stage ≠ 1</span><span class="t" id="s4" style="left:878.86px;top:562.8px;font-size:14px;line-height:21px;">メモ</span>
<span class="t" id="z1" style="left:359.72px;top:625.125px;font-size:14.5px;line-height:21.75px;letter-spacing:0.26px;">100%</span><span class="t" id="sr" style="left:694.56px;top:620.5px;font-size:14px;line-height:21px;letter-spacing:-0.23px;color:#858585">検索するテキストを</span>
</body></html>
